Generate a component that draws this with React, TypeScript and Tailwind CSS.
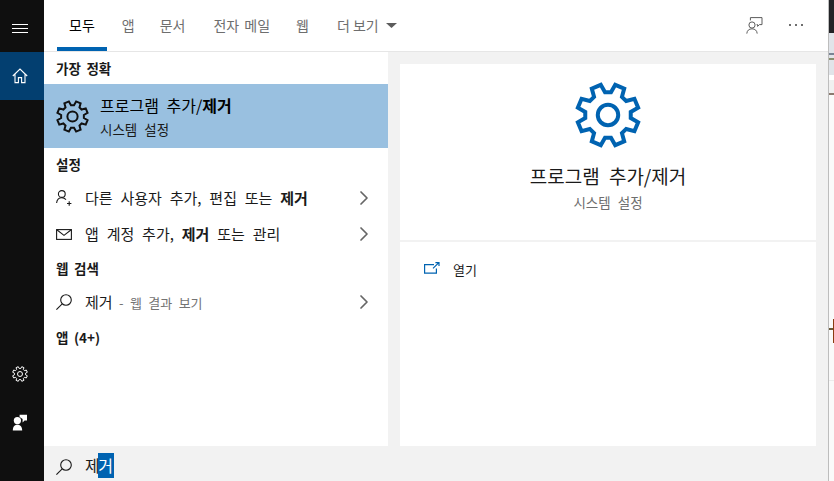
import { ChevronRight } from "lucide-react";

const FONT = "font-['Noto_Sans_CJK_KR','Noto_Sans',sans-serif]";

// eight-tooth cog outline, rotated so a notch sits at the top
function gearPath(cx: number, cy: number, outer: number, inner: number) {
  const pts: string[] = [];
  for (let i = 0; i < 8; i++) {
    const a = ((i * 45 + 22.5 - 90) * Math.PI) / 180;
    const step = Math.PI / 180;
    const offs: [number, number][] = [
      [-15, inner],
      [-9, outer],
      [9, outer],
      [15, inner],
    ];
    for (const [d, r] of offs) {
      const t = a + d * step;
      pts.push(`${(cx + Math.cos(t) * r).toFixed(2)} ${(cy + Math.sin(t) * r).toFixed(2)}`);
    }
  }
  return `M${pts.join("L")}Z`;
}

function Gear({ size, stroke, color, className }: { size: number; stroke: number; color: string; className?: string }) {
  const c = size / 2;
  const outer = c - stroke / 2;
  return (
    <svg width={size} height={size} viewBox={`0 0 ${size} ${size}`} fill="none" className={className}>
      <path d={gearPath(c, c, outer, outer * 0.74)} stroke={color} strokeWidth={stroke} strokeLinejoin="miter" />
      <circle cx={c} cy={c} r={size * 0.155} stroke={color} strokeWidth={stroke} />
    </svg>
  );
}

function SearchGlyph() {
  return (
    <svg width="16" height="16" viewBox="0 0 16 16" fill="none" stroke="#1a1a1a" strokeWidth="1.1">
      <circle cx="10" cy="6" r="5.3" />
      <path d="M6.2 9.8 L0.4 15.6" />
    </svg>
  );
}

function UserPlusGlyph() {
  return (
    <svg width="16" height="16" viewBox="0 0 16 16" fill="none" stroke="#1a1a1a" strokeWidth="1.1">
      <circle cx="5.8" cy="4" r="3.4" />
      <path d="M0.6 13 C0.9 9.8 3 7.8 5.8 7.8 C7.6 7.8 9 8.5 10 9.6" />
      <path d="M11 13.5 H15.4 M13.2 11.3 V15.7" />
    </svg>
  );
}

function MailGlyph() {
  return (
    <svg width="16" height="11" viewBox="0 0 16 11" fill="none" stroke="#1a1a1a" strokeWidth="1.1">
      <rect x="0.6" y="0.6" width="14.8" height="9.8" />
      <path d="M0.8 0.8 L8 6.4 L15.2 0.8" />
    </svg>
  );
}

function Row({ icon, children }: { icon: React.ReactNode; children: React.ReactNode }) {
  return (
    <div className="flex h-9 items-center pl-3 pr-3">
      <span className="flex w-4 shrink-0 items-center justify-center">{icon}</span>
      <span className="ml-[13px] flex-1 whitespace-nowrap text-[15px] text-[#1a1a1a] [word-spacing:4.5px]">{children}</span>
      <ChevronRight size={24} strokeWidth={1.7} className="text-[#666666]" />
    </div>
  );
}

function Heading({ children, className = "h-8" }: { children: React.ReactNode; className?: string }) {
  return (
    <div className={`flex items-center pl-3 text-[13.5px] font-bold text-[#1a1a1a] [word-spacing:2.5px] ${className}`}>
      {children}
    </div>
  );
}

const TABS = [
  { label: "앱", cls: "ml-[3px] px-3" },
  { label: "문서", cls: "ml-[1px] px-3" },
  { label: "전자 메일", cls: "ml-[4px] px-3 [word-spacing:2px]" },
  { label: "웹", cls: "ml-[2px] px-3" },
  { label: "더 보기", cls: "ml-[4px] pl-3" },
];

export default function App() {
  return (
    <div className={`flex h-[481px] w-[834px] overflow-hidden bg-white ${FONT}`}>
      {/* Side rail */}
      <div className="flex w-11 shrink-0 flex-col bg-[#0f0f0f]">
        <div className="flex h-[52px] items-start justify-center pr-1 pt-6">
          <svg width="16" height="9" viewBox="0 0 16 9" stroke="#fff" strokeWidth="1">
            <path d="M0 .5H16M0 4.5H16M0 8.5H16" />
          </svg>
        </div>
        <div className="flex h-12 items-center justify-center bg-[#033f70] pr-1">
          <svg width="16" height="16" viewBox="0 0 16 16" fill="none" stroke="#fff" strokeWidth="1.1">
            <path d="M0.8 8 L8 1 L15.2 8 M3 6 V14.6 H6.4 V9.6 H9.6 V14.6 H13 V6" />
          </svg>
        </div>
        <div className="flex-1" />
        <div className="flex h-12 items-center justify-center pr-1">
          <Gear size={16} stroke={1} color="#ffffff" />
        </div>
        <div className="flex h-[83px] items-start justify-center pr-1 pt-[15px]">
          <svg width="16" height="18" viewBox="0 0 16 18" fill="#fff">
            <circle cx="5.4" cy="7.6" r="3.6" />
            <path d="M0.8 17.6 C0.9 13.4 2.8 11.8 5.4 11.8 C8 11.8 10 13.4 10.2 17.6Z" />
            <path d="M7.6 1.8 H15 V7.4 H12.6 L10.6 9.4 V6 L7.6 4Z" />
          </svg>
        </div>
      </div>

      {/* Search flyout */}
      <div className="flex w-[784px] shrink-0 flex-col">
        <div className="flex h-[52px] shrink-0 items-start border-b-[1.5px] border-[#e6e6e6] pl-[13px]">
          <div className="flex h-[51px] items-center border-b-4 border-[#0063b1] px-3 pt-1 text-[14px] text-black">모두</div>
          {TABS.map((t) => (
            <div key={t.label} className={`flex h-[50px] items-center text-[14px] text-[#6e6e6e] ${t.cls}`}>
              {t.label}
            </div>
          ))}
          <div className="flex h-[50px] items-center pl-[7px]">
            <svg width="11" height="5" viewBox="0 0 11 5" fill="#5c5c5c">
              <path d="M0 0H11L5.5 5Z" />
            </svg>
          </div>
          <div className="flex-1" />
          <div className="flex h-[50px] items-center pr-[26px]">
            <svg width="17" height="17" viewBox="0 0 17 17" fill="none" stroke="#5c5c5c" strokeWidth="1">
              <circle cx="6" cy="8" r="3.1" />
              <path d="M0.8 16.6 C1 13.6 3 11.8 6 11.8 C9 11.8 11 13.6 11.2 16.6" />
              <path d="M4.4 3.4 V0.6 H16 V7.6 H13.4 L11.6 9.4 V7.6 H10.6" />
            </svg>
          </div>
          <div className="flex h-[50px] items-center gap-1 pr-[25px]">
            <span className="size-[2px] bg-[#6e6e6e]" />
            <span className="size-[2px] bg-[#6e6e6e]" />
            <span className="size-[2px] bg-[#6e6e6e]" />
          </div>
        </div>

        <div className="flex min-h-0 flex-1 bg-[#f2f2f2]">
          <div className="w-[344px] shrink-0 bg-white">
            <Heading>가장 정확</Heading>
            <div className="flex h-16 items-center bg-[#99c0e0] pl-3">
              <Gear size={33} stroke={2} color="#111111" />
              <div className="ml-[11px] flex flex-col">
                <span className="text-[16px] leading-5 text-black [word-spacing:4px]">
                  프로그램 추가/<b>제거</b>
                </span>
                <span className="mt-[6px] text-[13.5px] leading-4 text-[#1a1a1a] [word-spacing:4px]">시스템 설정</span>
              </div>
            </div>
            <Heading>설정</Heading>
            <Row icon={<UserPlusGlyph />}>
              다른 사용자 추가, 편집 또는 <b>제거</b>
            </Row>
            <Row icon={<MailGlyph />}>
              앱 계정 추가, <b>제거</b> 또는 관리
            </Row>
            <Heading>웹 검색</Heading>
            <Row icon={<SearchGlyph />}>
              제거<span className="text-[13px] text-[#737373] [word-spacing:3.5px]"> - 웹 결과 보기</span>
            </Row>
            <Heading className="h-[34px]">앱 (4+)</Heading>
          </div>

          <div className="flex-1 px-3 pt-3">
            <div className="flex h-full flex-col bg-white">
              <div className="flex h-[178px] flex-col items-center border-b-2 border-[#f2f2f2] pt-[18px]">
                <Gear size={66} stroke={4} color="#0063b1" />
                <span className="mt-[16px] text-[19px] leading-6 text-[#1a1a1a] [word-spacing:5px]">프로그램 추가/제거</span>
                <span className="mt-[6px] text-[13.5px] leading-4 text-[#6e6e6e] [word-spacing:4px]">시스템 설정</span>
              </div>
              <div className="flex items-center pl-[24px] pt-[18px]">
                <svg width="16" height="12" viewBox="0 0 16 12" fill="none" stroke="#0063b1" strokeWidth="1.2" className="mb-1">
                  <path d="M10 2.6 H0.6 V11.2 H12.4 V6.6" />
                  <path d="M9 6.4 L14.6 .8 M11.4 .6 H15 V4" />
                </svg>
                <span className="ml-[13px] text-[13px] leading-5 text-[#1a1a1a]">열기</span>
              </div>
            </div>
          </div>
        </div>

        <div className="flex h-[35px] shrink-0 items-center bg-[#f2f2f2] pl-3 pt-[6px]">
          <SearchGlyph />
          <span className="mb-[2px] ml-[13px] flex text-[16px] leading-[25px] text-[#1a1a1a]">
            제<span className="-ml-[2px] w-4 bg-[#0063b1] text-center text-white">거</span>
          </span>
        </div>
      </div>

      {/* Sliver of the window behind */}
      <div className="relative flex flex-1 flex-col border-l border-[#bdbdbd] bg-[#fafafa]">
        <div className="h-[33px] bg-[#222326]" />
        <div className="h-5 bg-[#e1e4e9]" />
        <div className="h-[2px] bg-[#7a8494]" />
        <div className="h-[3px] bg-[#e1e4e9]" />
        <div className="h-[2px] bg-[#8a8f70]" />
        <div className="h-[15px] bg-[#e1e4e9]" />
        <div className="h-[5px] bg-white" />
        <div className="h-[13px] bg-[#f0f0f0]" />
        <div className="h-[2px] bg-[#8a7a70]" />
        <div className="h-[233px]" />
        <div className="h-[2px] bg-[#6b5a3a]" />
        <div className="h-[50px]" />
        <div className="h-px bg-[#ececec]" />
        <span className="absolute right-0 top-[319px] h-6 w-px bg-[#8a3b10]" />
      </div>
    </div>
  );
}
